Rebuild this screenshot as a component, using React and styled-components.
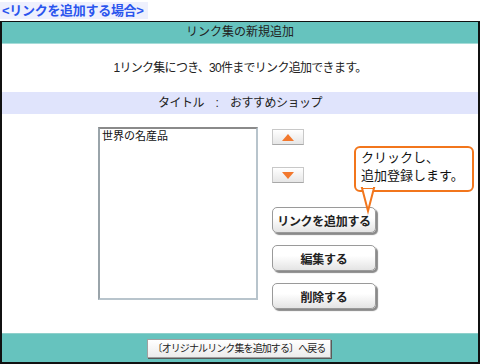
import React from 'react';
import styled, { createGlobalStyle } from 'styled-components';

const GlobalStyle = createGlobalStyle`
  html, body {
    margin: 0;
    padding: 0;
    background: #fff;
  }
  body {
    width: 480px;
    height: 364px;
    overflow: hidden;
    font-family: "Liberation Sans", "Noto Sans CJK JP", sans-serif;
    color: #222;
  }
`;

const Page = styled.div`
  display: flex;
  flex-direction: column;
  width: 480px;
  height: 364px;
`;

const CaseTag = styled.div`
  align-self: flex-start;
  margin-top: 2px;
  height: 17px;
  padding: 0 4px 0 2px;
  background: #eef0fd;
  color: #2a55ee;
  font-size: 13px;
  font-weight: bold;
  line-height: 17px;
  letter-spacing: -0.3px;
`;

const Frame = styled.div`
  margin-top: 2px;
  height: 341px;
  border: 2px solid #111;
  border-top-width: 1px;
  display: flex;
  flex-direction: column;
  box-sizing: content-box;
  width: 476px;
`;

const Header = styled.div`
  height: 21px;
  line-height: 21px;
  background: #66c3be;
  border-bottom: 1px solid #a6dcd8;
  text-align: center;
  font-size: 12px;
  color: #222;
`;

const Notice = styled.div`
  height: 48px;
  line-height: 48px;
  text-align: center;
  font-size: 12px;
  letter-spacing: -0.7px;
  color: #222;
`;

const TitleBand = styled.div`
  height: 22px;
  line-height: 22px;
  background: #e0e4fc;
  text-align: center;
  font-size: 12px;
  letter-spacing: -0.5px;
  color: #222;
`;

const Body = styled.div`
  position: relative;
  flex: 1;
  display: flex;
  padding: 13px 0 0 96px;
`;

const ListBox = styled.div`
  width: 152px;
  height: 167px;
  border: 2px solid #b8c4cc;
  border-top-color: #8a8a8a;
  border-left-color: #9aa4aa;
  padding: 1px 2px;
  font-size: 11px;
  line-height: 13px;
  color: #111;
  box-sizing: content-box;
`;

const Controls = styled.div`
  display: flex;
  flex-direction: column;
  align-items: flex-start;
  margin-left: 14px;
  padding-top: 2px;
`;

const ArrowButton = styled.div`
  width: 32px;
  height: 16px;
  margin-bottom: ${p => p.$gap}px;
  display: flex;
  align-items: center;
  justify-content: center;
  border: 1px solid #c8c8c8;
  border-bottom-color: #a8a8a8;
  background: linear-gradient(#ffffff, #e6e6e6);
  box-sizing: border-box;
`;

const Triangle = styled.span`
  width: 0;
  height: 0;
  border-left: 6px solid transparent;
  border-right: 6px solid transparent;
  ${p => p.$down
    ? 'border-top: 7px solid #f2782e;'
    : 'border-bottom: 7px solid #f2782e;'}
`;

const ActionButton = styled.div`
  width: 102px;
  height: 24px;
  margin-bottom: 12px;
  display: flex;
  align-items: center;
  justify-content: center;
  border: 1px solid #9a9a9a;
  border-radius: 5px;
  background: linear-gradient(#ffffff 40%, #e4e4e4);
  box-shadow: 2px 2px 1px #8a8a8a;
  font-size: 12px;
  font-weight: bold;
  letter-spacing: -0.3px;
  color: #222;
`;

const Callout = styled.div`
  position: absolute;
  left: 352px;
  top: 32px;
  width: 106px;
  height: 40px;
  padding: 1px 5px;
  border: 2px solid #f2761c;
  border-radius: 6px;
  background: #fff;
  font-size: 13px;
  line-height: 18px;
  color: #111;
`;

const Tail = styled.svg`
  position: absolute;
  left: 4px;
  top: 40px;
  overflow: visible;
`;

const Footer = styled.div`
  height: 28px;
  background: #66c3be;
  border-top: 1px solid #8fd0cb;
  display: flex;
  align-items: center;
  justify-content: center;
`;

const BackButton = styled.div`
  width: 182px;
  height: 17px;
  line-height: 17px;
  margin-left: -2px;
  text-align: center;
  white-space: nowrap;
  border: 1px solid #a0a0a0;
  background: linear-gradient(#ffffff, #ececec);
  box-shadow: 1px 1px 0 #5a5a5a;
  font-size: 10px;
  letter-spacing: -0.9px;
  color: #222;
`;

export default function App() {
  return (
    <Page>
      <GlobalStyle />
      <CaseTag>&lt;リンクを追加する場合&gt;</CaseTag>
      <Frame>
        <Header>リンク集の新規追加</Header>
        <Notice>1リンク集につき、30件までリンク追加できます。</Notice>
        <TitleBand>タイトル　:　おすすめショップ</TitleBand>
        <Body>
          <ListBox>世界の名産品</ListBox>
          <Controls>
            <ArrowButton $gap={22}><Triangle /></ArrowButton>
            <ArrowButton $gap={24}><Triangle $down /></ArrowButton>
            <ActionButton>リンクを追加する</ActionButton>
            <ActionButton>編集する</ActionButton>
            <ActionButton>削除する</ActionButton>
          </Controls>
          <Callout>
            クリックし、<br />追加登録します。
            <Tail width="20" height="26" viewBox="0 0 20 26">
              <polygon points="2,0 14,0 8,23" fill="#fff" stroke="#f2761c" strokeWidth="2" strokeLinejoin="miter" />
              <rect x="3" y="-3" width="10" height="3" fill="#fff" />
            </Tail>
          </Callout>
        </Body>
        <Footer>
          <BackButton>〔オリジナルリンク集を追加する〕へ戻る</BackButton>
        </Footer>
      </Frame>
    </Page>
  );
}
